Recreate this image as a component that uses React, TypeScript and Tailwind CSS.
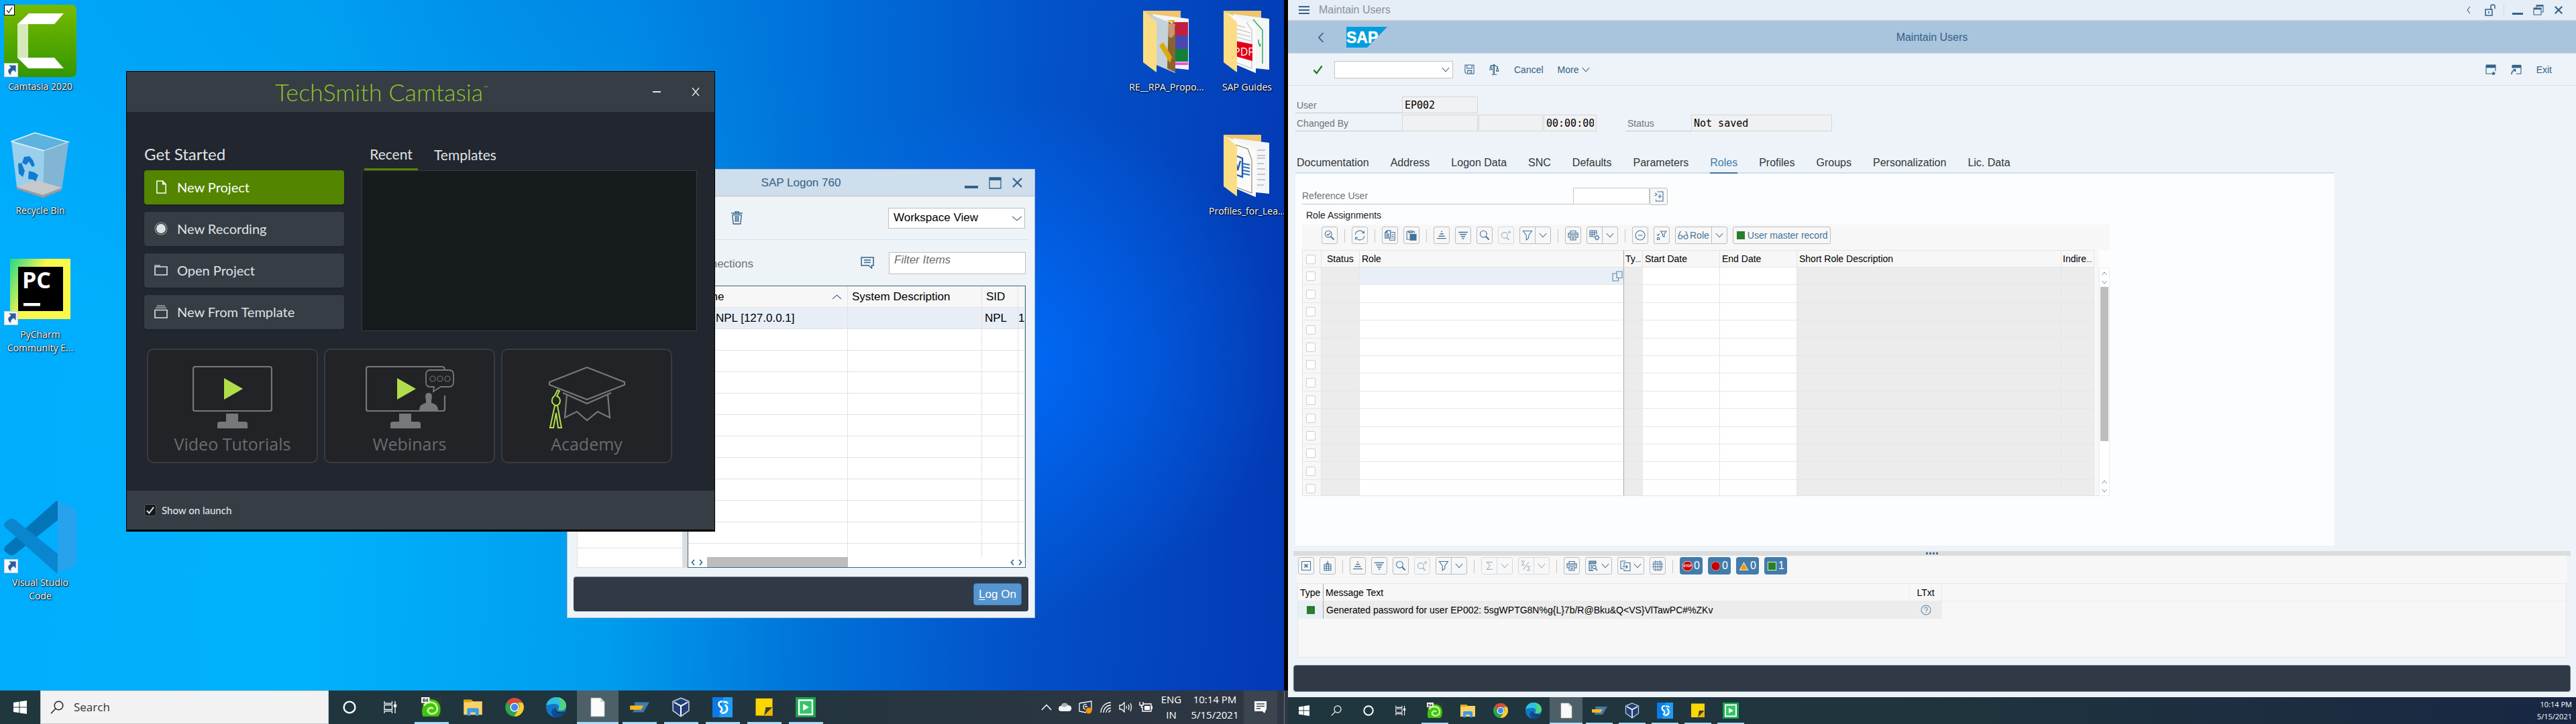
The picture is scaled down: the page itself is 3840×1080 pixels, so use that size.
import React from "react";
import type { ReactNode } from "react";

const SANS = "font-['Liberation_Sans',Arial,sans-serif]";
const SEGOE = "font-['Open_Sans','Noto_Sans',sans-serif]";
const LATO = "font-['Lato',sans-serif]";

type SvgProps = { className?: string; box?: string; children: ReactNode };

function Svg({ className = "size-4", box = "0 0 16 16", children }: SvgProps) {
  return (
    <svg className={className} viewBox={box} fill="none" stroke="currentColor" strokeWidth="1.1" aria-hidden="true" preserveAspectRatio="none">
      {children}
    </svg>
  );
}

/* ---------- Line icons of the SAP toolbars ---------- */

const Chevron = ({ className = "h-2 w-3" }: { className?: string }) => (
  <Svg className={className} box="0 0 12 8"><path d="M.8 1 6 6.8 11.2 1" /></Svg>
);
const DetailIcon = () => (
  <Svg><circle cx="6.2" cy="6.2" r="4.9" /><path d="m9.8 9.8 4.7 4.7" strokeWidth="1.8" /><path d="m3.8 6.2 1.8 1.9L8.8 4.4" strokeWidth="1.3" /></Svg>
);
const RefreshIcon = () => (
  <Svg><path d="M1.2 7A6.9 6.9 0 0 1 14 4.6M14.8 9A6.9 6.9 0 0 1 2 11.4M14.4 1.4v3.4H11M1.6 14.6v-3.4H5" /></Svg>
);
const CopyIcon = () => (
  <Svg><path d="M3.8.8h5v11.4H.8V3.8zM3.8.8v3H.8M2.5 6.2h4.6M2.5 8.2h4.6M2.5 10.2h4.6" strokeWidth="1.3" /><path d="M10 3.5h5.2v11.7H7.5v-2M10.5 7h3M10.5 9.5h3M10.5 12h3" /></Svg>
);
const PasteIcon = () => (
  <Svg><path d="M5 14H1.2V2.2h2.5M9.8 2.2h2.6v3" /><path d="M3.8 1.5h5.9v2.6H3.8z" fill="currentColor" fillOpacity=".4" /><path d="M6 6.5h9v8.800H6z" fill="currentColor" /></Svg>
);
const SortUpIcon = () => (
  <Svg><path d="M7 2.5h2M5.2 5.8h5.6M3.4 9.2h9.2M1 12.6h14" strokeWidth="1.4" /></Svg>
);
const SortDownIcon = () => (
  <Svg><path d="M1 3.5h14M3.2 6.8h9.6M5 10h6M6.6 13h2.8" strokeWidth="1.4" /></Svg>
);
const SearchIcon = () => (
  <Svg><circle cx="6.4" cy="6.2" r="4.9" /><path d="m10 9.8 4.6 4.7" strokeWidth="2" /></Svg>
);
const SearchPlusIcon = () => (
  <Svg><circle cx="5.8" cy="8" r="4.4" /><path d="m9 11.2 3.6 3.8" strokeWidth="1.8" /><path d="M13 .8v5M10.5 3.3h5" /></Svg>
);
const FilterIcon = () => (
  <Svg><path d="M1.5 1.5h13L9.8 8v4L6.2 15V8z" /></Svg>
);
const PrintIcon = () => (
  <Svg><path d="M4 4.5v-3h8v3M4 11H1V4.8h14V11h-3M1 6.8h14" /><path d="M4 9h8v6H4zM6 11.2h4M6 13h4" /></Svg>
);
const LayoutIcon = () => (
  <Svg><path d="M8 10H1V1h10v6M1 4h10M1 7h8M4.3 1v9M7.6 1v7" /><circle cx="11.5" cy="11.5" r="2.6" /><path d="M11.5 7.8v1M11.5 14.2v1.2M7.8 11.5h1M14.2 11.5h1.2M9 9l.7.7M13.4 13.4l.7.7M14 9l-.7.7M9 14l.7-.7" /></Svg>
);
const MinusIcon = () => (
  <Svg><circle cx="8" cy="8" r="7" /><path d="M4.8 8h6.4" /></Svg>
);
const FilterBackIcon = () => (
  <Svg><path d="M6.5 2h8.3l-3 4.2v4.3L9.4 9V6.2z" /><path d="M1 6.5l1.5 1.8 2.3-3M1.5 11.5h3v3h-3z" /></Svg>
);
const GlassesIcon = () => (
  <Svg><circle cx="3.8" cy="10.5" r="2.8" /><circle cx="12.2" cy="10.5" r="2.8" /><path d="M6.6 10h2.8M1 10l2.4-7L5 2.5M15 10l-2.4-7-1.6-.5" /></Svg>
);
const CloseBoxIcon = () => (
  <Svg><path d="M1.5 1.5h13v13h-13z" /><path d="m5.6 5.6 4.8 4.8M10.4 5.6l-4.8 4.8" strokeWidth="1.7" /></Svg>
);
const ExportGridIcon = () => (
  <Svg><path d="M3 6h10v9H3zM3 9h10M3 12h10M6.3 6v9M9.6 6v9M8 .8v5M6 3.8l2 2 2-2" strokeWidth="1.1" /></Svg>
);
const SigmaIcon = () => (
  <Svg><path d="M12 3.5V2.6H4.5L9 8l-4.5 5.4H12v-1" /></Svg>
);
const SubtotalIcon = () => (
  <Svg><path d="M6 1H1.5L4 4 1.5 7H6M14.5 9H10l2.5 3-2.5 3h4.5M3.5 14 12 2.5" /></Svg>
);
const ViewIcon = () => (
  <Svg><path d="M2 1h10v4H2z" fill="currentColor" fillOpacity=".7" /><path d="M2 5v10h6M4 7.5h2M4 10h2M4 12.5h2" strokeWidth="1.3" /><circle cx="9.5" cy="10" r="2.6" /><path d="m11.4 12 2.6 3" strokeWidth="1.6" /></Svg>
);
const SendIcon = () => (
  <Svg><path d="M5 12.5H1V1h7.5M6 8.5v-5h9v12H6v-3M3.5 9.5H11M8.6 7l2.5 2.5L8.6 12" /></Svg>
);
const GridIcon = () => (
  <Svg><path d="M2 2h12v12H2zM0 5.5h16M0 9.5h16M5 0v16M8.3 2v14M11.6 0v16" strokeWidth=".9" /></Svg>
);
const ValueHelpIcon = () => (
  <Svg className="h-4 w-3.5" box="0 0 14 16"><path d="M4.5 1H13v14H2.5v-2.5M8.3 5v6M5.3 8h6M1 3l3 2-3 2.2" /></Svg>
);
const F4Icon = () => (
  <Svg><path d="M7 1h8v9.5H7zM7 4H1v11h8.5v-4.5" /></Svg>
);

/* ---------- Taskbar pictures ---------- */

const StartIcon = () => (
  <Svg className="size-full" box="0 0 20 20"><path d="M0 3l8.5-1.2v7.7H0zM9.5 1.6 20 0v9.5H9.5zM0 10.5h8.5v7.7L0 17zM9.5 10.5H20V20L9.5 18.4z" fill="currentColor" stroke="none" /></Svg>
);
const LensIcon = () => (
  <Svg className="size-full" box="0 0 20 20"><circle cx="12.5" cy="7.5" r="6.3" strokeWidth="1.5" /><path d="M8 12 1 19.3" strokeWidth="1.5" /></Svg>
);
const CortanaIcon = () => (
  <Svg className="size-full" box="0 0 20 20"><circle cx="10" cy="10" r="8.4" strokeWidth="2.4" /></Svg>
);
const TaskViewIcon = () => (
  <Svg className="size-full" box="0 0 20 20"><path d="M1 1v3.200h11.5V1M1 19v-3.200h11.5V19M1 6.5h11.5v7H1zM17 1v18M15.500 6.500h3v2.500h-3z" strokeWidth="1.3" /></Svg>
);
const SapGui64 = () => (
  <Svg className="size-full" box="0 0 24 24">
    <path d="M1 0h23v23H1z" fill="#2d3a34" stroke="none" />
    <path d="M3 8c2-6 11-7 16-3 5 4 5 14 1 18H2c-2-5-1-11 1-15z" fill="#3fc413" stroke="none" />
    <path d="M3 10c5-6 15-5 16 3 1 7-9 9-11 4-1-4 5-6 6-3" stroke="#c8f78f" strokeWidth="2.3" />
    <path d="M0 0h10v7H0z" fill="#f3f3f3" stroke="none" />
    <text x="1.5" y="5.8" fontSize="6" fontWeight="700" fill="#222" stroke="none" fontFamily="Liberation Sans">64</text>
  </Svg>
);
const ExplorerIcon = () => (
  <Svg className="size-full" box="0 0 24 24"><path d="M1 3h9l2 2h11v16H1z" fill="#fcd266" stroke="none" /><path d="M1 3h9l1 1.5L10 6H1z" fill="#e8a200" stroke="none" /><path d="M5 22v-7q0-2 2-2h10q2 0 2 2v7h-4v-4H9v4z" fill="#3a9be8" stroke="none" /></Svg>
);
const ChromeIcon = () => (
  <Svg className="size-full" box="0 0 24 24">
    <circle cx="12" cy="12" r="11" fill="#2fa350" stroke="none" />
    <path d="M12 1a11 11 0 0 1 9.600 5.600H12A5.400 5.400 0 0 0 7 10L2.800 6A11 11 0 0 1 12 1z" fill="#e04635" stroke="none" />
    <path d="M21.600 6.600A11 11 0 0 1 11.500 23L16.800 14.500A5.400 5.400 0 0 0 15.500 6.600z" fill="#fbcb2c" stroke="none" />
    <circle cx="12" cy="12" r="5.300" fill="#fff" stroke="none" /><circle cx="12" cy="12" r="4.200" fill="#4a86ef" stroke="none" />
  </Svg>
);
const EdgeIcon = () => (
  <Svg className="size-full" box="0 0 24 24">
    <circle cx="12" cy="12" r="12" fill="#1276c8" stroke="none" />
    <path d="M.2 10C1 4 6 0 12 0c7 0 12 5 12 10 0 4-3 6-6.5 6-3 0-3-1.500-2.300-3C16 10.500 14 8 10.500 8 6 8 2 9 .2 10z" fill="#2fc0e0" stroke="none" />
    <path d="M14 .2C20 1 24 5 24 10c0 4-3 6-6.500 6-3 0-3-1.500-2.300-3 3-3 2-9-1.200-12.800z" fill="#4fd67c" stroke="none" />
    <path d="M8.500 13c0 6 6 8.500 13.500 5.500C20 22 16 24 12 24 7 23 4.500 18 8.500 13z" fill="#0c4a9a" stroke="none" />
    <path d="M11 12c-1 5 5 7.500 11.500 5l-.8 1.800C16 21.500 9.500 19 9.500 14z" fill="#20343d" stroke="none" />
  </Svg>
);
const PageIcon = () => (
  <Svg className="size-full" box="0 0 24 24"><path d="M4 1h11.500L20 5.500V23H4z" fill="#fafafa" stroke="#c9c9c9" strokeWidth=".6" /><path d="M15.500 1v4.500H20z" fill="#cfcfcf" stroke="none" /></Svg>
);
const LogonIcon = () => (
  <Svg className="size-full" box="0 0 24 24"><path d="M6 6h18l-7 12H4l3-5z" fill="#4178b0" stroke="none" /><path d="M1 10h16l-3 5H1z" fill="#fdb913" stroke="none" /></Svg>
);
const VBoxIcon = () => (
  <Svg className="size-full" box="0 0 24 24"><path d="M12 1 21.500 5v11L12 23 2.500 16V5z" fill="#223f75" stroke="#c9d4e2" strokeWidth="1.200" /><path d="M4 6l8 4.500L20 6M12 11v11" stroke="#fff" strokeWidth="1.600" /></Svg>
);
const BlueSIcon = () => (
  <Svg className="size-full" box="0 0 24 24"><path d="M0 0h24v24H0z" fill="#0a7be6" stroke="none" /><path d="M13 0h11v24H8z" fill="#1d9bf5" stroke="none" /><path d="M12 5c-6 0-5 5-2 7 2 1.500 2 4-1 6M13 5.500c4 0 5 1 5 2M15 9c4 3 4 10-4 10" stroke="#fff" strokeWidth="2.200" /></Svg>
);
const StickyIcon = () => (
  <Svg className="size-full" box="0 0 24 24"><path d="M2 1.500h20V22H2z" fill="#fdd602" stroke="none" /><path d="M12 22l2-10h8z" fill="#3c3c34" stroke="none" /><path d="M12 22 22 12v10z" fill="#f0b400" stroke="none" /></Svg>
);
const CamtasiaPlayIcon = () => (
  <Svg className="size-full" box="0 0 24 24"><path d="M0 0h24v24H0z" fill="#17a34c" stroke="none" /><path d="M4 3.500h16v17H4z" fill="#35c466" stroke="#fff" strokeWidth="2" /><path d="M9 8l7 4-7 4z" fill="#fff" stroke="none" /></Svg>
);

const apps: { name: string; icon: ReactNode; running: boolean; active?: boolean }[] = [
  { name: "SAP GUI 64", icon: <SapGui64 />, running: true },
  { name: "File Explorer", icon: <ExplorerIcon />, running: false },
  { name: "Chrome", icon: <ChromeIcon />, running: false },
  { name: "Edge", icon: <EdgeIcon />, running: false },
  { name: "Document", icon: <PageIcon />, running: true, active: true },
  { name: "SAP Logon", icon: <LogonIcon />, running: true },
  { name: "VirtualBox", icon: <VBoxIcon />, running: true },
  { name: "Snagit", icon: <BlueSIcon />, running: true },
  { name: "Sticky Notes", icon: <StickyIcon />, running: true },
  { name: "Camtasia", icon: <CamtasiaPlayIcon />, running: true },
];

function TaskApps({ compact = false }: { compact?: boolean }) {
  return (
    <>
      {apps.map((a) => (
        <button
          key={a.name}
          aria-label={a.name}
          className={`flex h-full flex-col items-center justify-end ${compact ? "w-[49px]" : "w-[62px]"} ${a.active ? "bg-[#4d6068]" : ""}`}
        >
          <span className="flex flex-1 items-center pt-0.5">
            <span className={compact ? "size-6" : "size-[30px]"}>{a.icon}</span>
          </span>
          <span className={`${compact ? "h-0.5" : "h-[3px]"} ${a.running ? "bg-[#a9dcfa]" : ""} ${a.active ? "w-full" : compact ? "w-10" : "w-[51px]"}`} />
        </button>
      ))}
    </>
  );
}

function GlyphButton({ label, className, small = false, children }: { label: string; className: string; small?: boolean; children: ReactNode }) {
  return (
    <button aria-label={label} className={`flex h-full items-center justify-center text-white ${className}`}>
      <span className={small ? "size-4" : "size-5"}>{children}</span>
    </button>
  );
}

/* ---------- Desktop icons ---------- */

const ShortcutArrow = () => (
  <span className="absolute bottom-0 left-0 size-[21px] border border-[#c8d0d8] bg-[#f6f8fa] text-[#2c5c9e]">
    <Svg className="size-full" box="0 0 20 20"><path d="M6.500 2.500h11v11l-3.500-3.500c-4 2-5 5-4 8-6-4-6-9 0-12z" fill="currentColor" stroke="none" /></Svg>
  </span>
);

const CamtasiaLogo = () => (
  <Svg className="size-[108px]" box="0 0 108 108">
    <defs><linearGradient id="cam" x1="0" y1="0" x2="0" y2="1"><stop stopColor="#77bb00" /><stop offset="1" stopColor="#349600" /></linearGradient></defs>
    <path d="M0 0h100q8 0 8 8v92q0 8-8 8H0z" fill="url(#cam)" stroke="none" />
    <path d="M20 29h16v50H20z" fill="#d5eab8" stroke="none" />
    <path d="M37 13h52L75 29H20zM20 79h55l14 16H36z" fill="#fff" stroke="none" />
  </Svg>
);
const RecycleLogo = () => (
  <Svg className="h-[98px] w-[88px]" box="0 0 88 98">
    <path d="M1 14 36 1l50 14-10 70-28 12L9 82z" fill="#9ad0ec" stroke="none" />
    <path d="M1 14 36 1l50 14-36 13z" fill="#5cb3de" stroke="#e6f5fc" strokeWidth="1.500" />
    <path d="M50 28l36-13-10 70-28 12z" fill="#82b4d4" stroke="none" />
    <path d="M9 82 36 71l40 12-28 13z" fill="#c6c8cc" stroke="none" />
    <path d="M9 82l39 12v4L9 85zM48 94l28-11v4L48 98z" fill="#989ba3" stroke="none" />
    <path d="M20 37l8-1 5 6 3 8-4 2-5-8-4 5-6-3zM11 47l5-1 5 12-3 9-6-5zM27 58l8 2 6 4-4 10-3-3-8-1z" fill="#0f7bd4" stroke="none" />
  </Svg>
);
const PyCharmLogo = () => (
  <Svg className="size-[90px]" box="0 0 90 90">
    <defs><linearGradient id="pc" x1="0" y1="0" x2="1" y2=".5"><stop stopColor="#21d789" /><stop offset=".5" stopColor="#fcf84a" /></linearGradient></defs>
    <path d="M0 0h90v90H0z" fill="url(#pc)" stroke="none" /><path d="M12 12h67v66H12z" fill="#000" stroke="none" />
    <text x="18" y="44" fontSize="34" fontWeight="700" fill="#fff" stroke="none" fontFamily="Open Sans">PC</text>
    <path d="M20 66h25v4.500H20z" fill="#fff" stroke="none" />
  </Svg>
);
const VsCodeLogo = () => (
  <Svg className="size-[108px]" box="0 0 108 108">
    <path d="M80 0v29L16 80q-5 3-9 0l-5-4q-4-4 0-8L77 1z" fill="#0274b8" stroke="none" />
    <path d="M80 108V79L16 28q-5-3-9 0l-5 4q-4 4 0 8l75 67z" fill="#0a86cf" stroke="none" />
    <path d="M80 0l22 10q6 3 6 8v72q0 5-6 8l-22 10z" fill="#27a3ee" stroke="none" />
  </Svg>
);

function Folder({ kind }: { kind: "photo" | "pdf" | "word" }) {
  return (
    <Svg className="h-[94px] w-[70px]" box="0 0 70 94">
      <path d="M0 1h56v60H0z" fill="#eec66c" stroke="none" />
      <path d="M14 6l54 7v76l-20-2z" fill="#f4f5f7" stroke="none" />
      {kind === "photo" && (
        <>
          <path d="M44 18h23v20H44z" fill="#c02040" stroke="none" /><path d="M44 38h23v20H44z" fill="#4848b0" stroke="none" />
          <path d="M44 58h23v19H44z" fill="#128038" stroke="none" /><path d="M44 78h23v4H44z" fill="#f050e0" stroke="none" />
        </>
      )}
      {kind === "pdf" && <path d="M44 14 58 30v50M52 44c0 8 2 10 2 6M55 51l-1 4" stroke="#2faa5e" strokeWidth="1.500" />}
      {kind === "word" && <path d="M50 24h12M50 32h12M50 36h12M50 44h10M50 52h12M50 60h12M50 68h12M50 76h10" stroke="#9a9a9a" />}
      <path d="M4 4l44 18v72L20 82z" fill={kind === "photo" ? "#c5d2d8" : "#fafafa"} stroke="none" />
      {kind === "photo" && (
        <>
          <path d="M38 17l10 6v70l-12-6z" fill="#8a6230" stroke="none" /><path d="M38 20h9v16q-6 10-9 2z" fill="#c99470" stroke="none" />
          <path d="M24 53l6-5 13 22-3 9z" fill="#dba90c" stroke="none" />
          <path d="M34 15h13v4z" fill="#e6b400" stroke="none" />
        </>
      )}
      {kind === "pdf" && (
        <>
          <path d="M18 22l14 4M18 28l22 6M18 34l22 6M18 40l22 6M18 78l24 9V30l-8-12" stroke="#b9bcc4" />
          <path d="M18 46l25 5v25l-25-7z" fill="#e2001a" stroke="none" />
          <text x="15" y="68" fontSize="16" fill="#fff" stroke="none" fontFamily="Open Sans">PDF</text>
        </>
      )}
      {kind === "word" && (
        <>
          <path d="M18 16l18 6 6 16v50L18 79" stroke="#8a8060" />
          <path d="M20 33l8 3v28l-8-3M18 40l3 14 4-14" stroke="#2058b0" strokeWidth="2.400" />
          <path d="M29 44l10 2M29 49l10 2M29 54l10 2M29 59l10 2" stroke="#2a70c0" strokeWidth="2" />
        </>
      )}
      <path d="M0 1l20 17v75L0 78z" fill="#fbdd84" stroke="none" />
    </Svg>
  );
}

function DesktopIcon({ pos, label, children }: { pos: string; label: string; children: ReactNode }) {
  return (
    <div className={`absolute flex w-[120px] flex-col items-center ${pos}`}>
      <div className="flex h-[108px] items-center justify-center">{children}</div>
      <span className="mt-1 text-center text-sm leading-5 whitespace-pre text-white [text-shadow:1px_1px_2px_#000,0_0_2px_#000]">{label}</span>
    </div>
  );
}

/* ---------- Camtasia start window ---------- */

const startActions: { label: string; icon: ReactNode; primary?: boolean }[] = [
  { label: "New Project", primary: true, icon: <Svg className="h-5 w-[17px]" box="0 0 18 20"><path d="M2 1h9l5 5v13H2z" strokeWidth="1.600" /><path d="M11 1v5h5z" fill="currentColor" /></Svg> },
  { label: "New Recording", icon: <Svg className="size-5" box="0 0 20 20"><circle cx="10" cy="10" r="9" strokeOpacity=".6" /><circle cx="10" cy="10" r="7" fill="currentColor" stroke="none" /></Svg> },
  { label: "Open Project", icon: <Svg className="h-4 w-5" box="0 0 20 16"><path d="M1 3h18v12H1z" strokeWidth="1.600" /><path d="M0 1h9" strokeWidth="2" strokeOpacity=".6" /></Svg> },
  { label: "New From Template", icon: <Svg className="size-5" box="0 0 20 20"><path d="M1 7.500h18V19H1z" strokeWidth="1.600" /><path d="M2 4.200h16M4 1.200h12" strokeOpacity=".7" strokeWidth="1.500" /></Svg> },
];

const MonitorArt = ({ people = false }: { people?: boolean }) => (
  <Svg className={people ? "h-[94px] w-[132px]" : "h-[94px] w-[119px]"} box={people ? "0 0 132 94" : "0 0 119 94"}>
    <path d={people ? "M118 44v20q0 3-3 3H4q-3 0-3-3V4q0-3 3-3h110q4 0 4 6" : "M4 1h111q3 0 3 3v60q0 3-3 3H4q-3 0-3-3V4q0-3 3-3z"} strokeWidth="2.200" />
    <path d="M50 71h18v12h10q4 0 4 3v7H37v-7q0-3 4-3h9z" fill="currentColor" stroke="none" />
    <path d="M47 18l28 16-28 16z" fill="#b2dd4a" stroke="none" />
    {people && (
      <>
        <path d="M96 6h28q7 0 7 7v11q0 7-7 7h-12l-11 7 1-7h-6q-6 0-6-7V13q0-7 6-7z" fill="#212326" strokeWidth="1.800" />
        <circle cx="100" cy="19" r="4" /><circle cx="111" cy="19" r="4" /><circle cx="122" cy="19" r="4" />
        <path d="M80 66q0-9 10-11v-4q-3-11 4-11t4 11v4q10 2 10 11z" fill="currentColor" stroke="none" />
      </>
    )}
  </Svg>
);
const CapArt = () => (
  <Svg className="h-[94px] w-[116px]" box="0 0 116 94">
    <path d="M58 2 114 24v4L58 50 2 28v-4z" strokeWidth="2.200" strokeLinejoin="round" /><path d="M22 40 58 56l36-16M28 42l-3 35 18-9 15 13 16-13 18 9-3-35" strokeWidth="2.200" />
    <path d="M14 36l-4 8q-5 4-4 10 3 5 7 5 5-2 5-8-1-5-5-6l4-8zM10 59 3 92h5l4-22 3 22h5L14 59z" stroke="#b2dd4a" strokeWidth="2" />
  </Svg>
);

function CamtasiaWindow() {
  const cards = [
    { label: "Video Tutorials", art: <MonitorArt /> },
    { label: "Webinars", art: <MonitorArt people /> },
    { label: "Academy", art: <CapArt /> },
  ];
  return (
    <section className={`absolute top-[106px] left-[188px] z-10 flex w-[878px] flex-col border border-b-[3px] border-black bg-[#22262e] text-[#dfe2e5] ${LATO}`}>
      <header className="relative flex h-[60px] items-center bg-[#363d44]">
        <h1 className="ml-[221px] flex text-4xl leading-none font-light text-[#92c12b]">
          TechSmith Camtasia<span className="text-[10px] leading-6">™</span>
        </h1>
        <button aria-label="Minimize" className="mr-[42px] ml-auto"><Svg className="size-4"><path d="M2 8h12" strokeWidth="2" /></Svg></button>
        <button aria-label="Close" className="mr-5"><Svg className="size-4"><path d="m3 2 10 12M13 2 3 14" strokeWidth="1.500" /></Svg></button>
      </header>
      <div className="px-[26px] pt-[45px] pb-[41px]">
        <div className="flex">
          <div className="w-[300px]">
            <h2 className="h-[42px] text-2xl leading-9">Get Started</h2>
            <div className="flex flex-col gap-[11px]">
              {startActions.map((a) => (
                <button key={a.label} className={`flex h-[51px] items-center gap-[14px] rounded pb-0.5 pl-[15px] text-xl shadow-sm ${a.primary ? "bg-[#538500] text-white" : "bg-[#363d44]"}`}>
                  <span className="flex w-5 justify-center">{a.icon}</span>{a.label}
                </button>
              ))}
            </div>
          </div>
          <div className="ml-[26px] flex flex-1 flex-col">
            <div role="tablist" className="ml-1 flex h-[42px] text-[21px]">
              <button role="tab" aria-selected="true" className="flex w-20 justify-center border-b-[3px] border-[#538500] leading-9">Recent</button>
              <button role="tab" aria-selected="false" className="px-6 pb-1 leading-9">Templates</button>
            </div>
            <div className="h-[240px] w-[500px] border border-[#363d42] bg-[#161b1d]" />
          </div>
        </div>
        <div className="mt-[26px] ml-1 flex gap-[9px]">
          {cards.map((c) => (
            <button key={c.label} className="flex h-[171px] w-[255px] flex-col items-center rounded-[10px] border-2 border-[#383b3f] bg-[#212326] pt-[24px] text-[#77787b]">
              {c.art}
              <span className={`mt-1 text-[25px] leading-9 text-[#6a6b6e] ${SEGOE}`}>{c.label}</span>
            </button>
          ))}
        </div>
      </div>
      <footer className="flex h-[58px] items-center bg-[#363d44] pl-[26px]">
        <label className="flex items-center gap-2 text-[15px] font-medium">
          <span className="relative flex size-[18px]">
            <input type="checkbox" defaultChecked className="size-[18px] appearance-none rounded-sm border border-[#555c61] bg-[#15191b]" />
            <span className="pointer-events-none absolute inset-0"><Svg className="size-full"><path d="M3.500 8.500 6.500 12l6-8" strokeWidth="1.800" /></Svg></span>
          </span>
          Show on launch
        </label>
      </footer>
    </section>
  );
}

/* ---------- SAP Logon window ---------- */

function SapLogonWindow() {
  const cell = "h-8 border-r border-b border-[#e2e2e2] align-middle overflow-hidden whitespace-nowrap";
  return (
    <section className={`absolute top-[252px] left-[845px] flex w-[698px] flex-col border border-[#b7bfc7] bg-[#eef3f8] text-[17px] text-black ${SANS}`}>
      <header className="relative flex h-[40px] items-center justify-center border-b border-[#b9bfc6] bg-[#cfdeec] text-[#346187]">
        SAP Logon 760
        <div className="absolute right-[18px] flex items-center gap-4">
          <button aria-label="Minimize" className="pt-3"><Svg className="h-1 w-5" box="0 0 20 4"><path d="M0 2h20" strokeWidth="4" /></Svg></button>
          <button aria-label="Maximize"><Svg className="h-[18px] w-[19px]" box="0 0 19 18"><path d="M1 1h17v16H1z" strokeWidth="1.300" /><path d="M1 3h17" strokeWidth="4" /></Svg></button>
          <button aria-label="Close"><Svg className="size-[15px]"><path d="m1 1 14 14M15 1 1 15" strokeWidth="2.400" /></Svg></button>
        </div>
      </header>
      <div className="mx-[10px] flex h-[65px] items-center border-b border-[#d3e0ee] pr-1">
        <button aria-label="Delete" className="mr-[216px] ml-auto text-[#346187]">
          <Svg className="h-5 w-[19px]" box="0 0 18 20"><path d="M1 3h16M6.500 2.500V1h5v1.500M2.500 5.500 4 19h10l1.500-13.500M7 7v9M9 7v9M11 7v9M3 5.500h12" strokeWidth="1.300" /></Svg>
        </button>
        <div className="relative">
          <select aria-label="View" defaultValue="w" className="block h-[31px] w-[204px] appearance-none border border-[#bfbfbf] bg-white pl-[7px]">
            <option value="w">Workspace View</option>
          </select>
          <span className="pointer-events-none absolute top-3 right-1 text-[#346187]"><Chevron className="h-2 w-4" /></span>
        </div>
      </div>
      <div className="flex h-[68px] items-center pr-[13px]">
        <span className="mt-1 ml-auto text-[#6d7379]">Connections</span>
        <Svg className="mr-[22px] ml-[160px] h-[18px] w-5 text-[#346187]" box="0 0 20 18"><path d="M1 1h18v12h-2.500v4L12 13H1zM5 5h10M5 8.500h10" strokeWidth="1.500" /></Svg>
        <input aria-label="Filter Items" placeholder="Filter Items" className="h-[33px] w-[204px] border border-[#bfbfbf] bg-white pb-2 pl-[7px] italic placeholder:text-[#6d6d6d]" />
      </div>
      <div className="flex h-[421px] pr-[13px] pl-[14px]">
        <div className="flex flex-1 flex-col justify-end border border-[#dfe1e3] bg-white"><div className="h-[29px] border-t border-[#dfe1e3]" /></div>
        <div className="w-[7px] bg-[#dadddd]" />
        <div className="flex w-[504px] flex-col border border-[#3c667c] bg-white">
          <div className="flex-1 overflow-hidden">
            <table className="w-full table-fixed border-separate border-spacing-0 text-left">
              <colgroup><col className="w-[238px]" /><col className="w-[200px]" /><col className="w-[54px]" /><col /></colgroup>
              <thead className="bg-[#f7f7f7]">
                <tr>
                  <th className={`${cell} pl-2 font-normal`}><span className="flex items-center justify-between pr-2">Name<span className="rotate-180 text-[#346187]"><Chevron className="h-2 w-[15px]" /></span></span></th>
                  <th className={`${cell} pl-1.5 font-normal`}>System Description</th>
                  <th className={`${cell} pl-1.5 font-normal`}>SID</th>
                  <th className={`${cell} font-normal`} />
                </tr>
              </thead>
              <tbody>
                <tr className="bg-[#e8eef6]">
                  <td className={`${cell} pl-[41px]`}>NPL [127.0.0.1]</td><td className={cell} /><td className={`${cell} pl-1`}>NPL</td><td className={cell}>1</td>
                </tr>
                {Array.from({ length: 11 }, (_, i) => (
                  <tr key={i}><td className={cell} /><td className={cell} /><td className={cell} /><td className={cell} /></tr>
                ))}
              </tbody>
            </table>
          </div>
          <div className="flex h-[15px] items-center gap-1.5 px-1 text-[#2f6f9f]">
            <Svg className="h-2.5 w-1.5" box="0 0 6 10"><path d="M5 1 1.500 5 5 9" strokeWidth="1.800" /></Svg>
            <Svg className="h-2.5 w-1.5" box="0 0 6 10"><path d="m1 1 3.500 4L1 9" strokeWidth="1.800" /></Svg>
            <div className="h-full w-[210px] bg-[#bdbdbd]" />
            <Svg className="ml-auto h-2.5 w-1.5" box="0 0 6 10"><path d="M5 1 1.500 5 5 9" strokeWidth="1.800" /></Svg>
            <Svg className="h-2.5 w-1.5" box="0 0 6 10"><path d="m1 1 3.500 4L1 9" strokeWidth="1.800" /></Svg>
          </div>
        </div>
      </div>
      <footer className="mx-[9px] mt-[13px] mb-[9px] flex h-[52px] items-center justify-end rounded border-t border-[#7d8890] bg-[#2f3a46] pr-2.5">
        <button className="h-[33px] w-[72px] rounded-sm border border-[#3a7ab8] bg-[#5695cf] text-white"><span className="underline underline-offset-2">L</span>og On</button>
      </footer>
    </section>
  );
}

/* ---------- Left monitor ---------- */

function LeftMonitor() {
  return (
    <div className={`flex min-w-0 flex-col ${SEGOE}`}>
      <main className="relative flex-1 overflow-hidden border-r-[6px] border-black bg-[radial-gradient(ellipse_22%_38%_at_78%_52%,#006effdd,#0066f000),radial-gradient(ellipse_60%_70%_at_48%_-10%,#0060d466,#0060d400),linear-gradient(92deg,#00adfd_0%,#00b2fb_25%,#009cee_48%,#0072d8_64%,#0350c8_80%,#0339b4_100%)]">
        <DesktopIcon pos="left-0 top-[7px]" label="Camtasia 2020">
          <span className="relative">
            <CamtasiaLogo />
            <input type="checkbox" aria-label="Select Camtasia 2020" className="absolute top-0 left-0 size-4 appearance-none border border-black bg-white" />
            <span className="pointer-events-none absolute top-0 left-0 text-black"><Svg><path d="m4 8 3 4 5-8" /></Svg></span>
            <ShortcutArrow />
          </span>
        </DesktopIcon>
        <DesktopIcon pos="left-0 top-[192px]" label="Recycle Bin"><RecycleLogo /></DesktopIcon>
        <DesktopIcon pos="left-0 top-[377px]" label={"PyCharm\nCommunity E..."}>
          <span className="relative flex size-[108px] items-center justify-center"><PyCharmLogo /><ShortcutArrow /></span>
        </DesktopIcon>
        <DesktopIcon pos="left-0 top-[747px]" label={"Visual Studio\nCode"}><span className="relative"><VsCodeLogo /><ShortcutArrow /></span></DesktopIcon>
        <DesktopIcon pos="right-[115px] top-[8px]" label="RE__RPA_Propo..."><Folder kind="photo" /></DesktopIcon>
        <DesktopIcon pos="-right-[5px] top-[8px]" label="SAP Guides"><Folder kind="pdf" /></DesktopIcon>
        <DesktopIcon pos="-right-[5px] top-[193px]" label="Profiles_for_Lea..."><Folder kind="word" /></DesktopIcon>
        <SapLogonWindow />
        <CamtasiaWindow />
      </main>
      <footer className="flex h-[50px] items-center bg-linear-to-r from-[#20373e] via-[#20343d] to-[#2f3744] text-white">
        <GlyphButton label="Start" className="w-[60px]"><StartIcon /></GlyphButton>
        <label className="flex h-full w-[430px] items-center gap-[15px] border border-[#c5c8c9] bg-[#f2f2f2] pl-3.5 text-[#222]">
          <span className="size-5"><LensIcon /></span>
          <input type="search" placeholder="Search" className="flex-1 bg-transparent text-[17px] outline-none placeholder:text-[#333]" />
        </label>
        <GlyphButton label="Cortana" className="w-[62px]"><CortanaIcon /></GlyphButton>
        <GlyphButton label="Task View" className="w-[60px]"><TaskViewIcon /></GlyphButton>
        <TaskApps />
        <div className="ml-auto flex h-full items-center gap-2.5">
          <Svg className="h-2.5 w-4" box="0 0 16 10"><path d="M1 9 8 1.500 15 9" strokeWidth="1.500" /></Svg>
          <Svg className="h-4 w-5" box="0 0 20 16"><path d="M4 14a4 4 0 0 1 0-8c1-5 8-6 10-1 4 0 6 3 5 6-1 3-3 3-4 3z" fill="#f4f4f4" stroke="none" /><path d="M4 6c1-5 8-6 10-1L9 8z" fill="#aab0b5" stroke="none" /></Svg>
          <Svg className="size-5" box="0 0 20 20"><path d="M1 4 19 1v13M1 4v12l10 2M12 6c-3-1-5 0-5 3s1 4 3 4M9 9h4" strokeWidth="1.300" /><circle cx="15" cy="15" r="4.500" fill="#ff9500" stroke="none" /></Svg>
          <Svg className="size-5" box="0 0 20 20"><path d="M3 18A15 15 0 0 1 18 3M7 18A11 11 0 0 1 18 7M11 18a7 7 0 0 1 7-7M15 18a3 3 0 0 1 3-3" strokeWidth="1.300" /></Svg>
          <Svg className="size-5" box="0 0 20 20"><path d="M1 7h3l4-4v14l-4-4H1zM11 8q1 2 0 4M14 6q2 4 0 8M17 4q3 6 0 12" strokeWidth="1.300" /></Svg>
          <Svg className="size-5" box="0 0 20 20"><path d="M6 5h12v11H5V9M1 2v5h5V2M3.500 7v4" strokeWidth="1.400" /><path d="M8 8h8v6H8zM18 8h2v5h-2z" fill="currentColor" stroke="none" /></Svg>
          <button className="flex w-9 flex-col items-center text-[15px] leading-[23px]"><span>ENG</span><span>IN</span></button>
          <time className="-mr-1 flex w-[74px] flex-col items-center text-[15px] leading-[23px]"><span>10:14 PM</span><span>5/15/2021</span></time>
          <button aria-label="Notifications" className="flex h-full w-[50px] items-center justify-center bg-[#3b444f]">
            <Svg className="size-5" box="0 0 20 20"><path d="M1 1h18v11l-3 7-3-3H1z" fill="#fff" stroke="none" /><path d="M4 5h12M4 8.500h12M4 12h6" stroke="#3b444f" strokeWidth="1.500" /></Svg>
          </button>
          <span className="h-full w-1.5 border-l border-[#6f767e]" />
        </div>
      </footer>
    </div>
  );
}

/* ---------- SAP GUI ---------- */

const toolBtn = "flex h-[26px] items-center justify-center rounded-[3px] border border-[#bdbdbd] bg-[#f7f7f7] text-[#44739b]";

function Tool({ label, children, off = false }: { label: string; children: ReactNode; off?: boolean }) {
  return <button aria-label={label} disabled={off} className={`${toolBtn} w-6 ${off ? "opacity-50" : ""}`}>{children}</button>;
}
function SplitTool({ label, children, off = false, text }: { label: string; children: ReactNode; off?: boolean; text?: string }) {
  return (
    <div className={`${toolBtn} ${off ? "opacity-50" : ""}`}>
      <button aria-label={label} disabled={off} className={`flex h-full items-center ${text ? "gap-0.5 px-[3px]" : "w-[22px] justify-center"}`}>{children}{text}</button>
      <button aria-label={`${label} options`} disabled={off} className="flex h-full w-[23px] items-center justify-center border-l border-[#bdbdbd]"><Chevron /></button>
    </div>
  );
}
function MenuTool({ label, children }: { label: string; children: ReactNode }) {
  return <button aria-label={label} className={`${toolBtn} w-10 gap-1`}>{children}<Chevron /></button>;
}
const Sep = () => <span className="mx-0.5 h-5 w-px bg-[#c9c9c9]" />;

function Counter({ label, value, children }: { label: string; value: number; children: ReactNode }) {
  return (
    <button aria-label={label} className="flex h-[26px] w-[34px] items-center justify-center gap-0.5 rounded-sm bg-[#427cac] text-base text-white">
      {children}{value}
    </button>
  );
}

const tabs = ["Documentation", "Address", "Logon Data", "SNC", "Defaults", "Parameters", "Roles", "Profiles", "Groups", "Personalization", "Lic. Data"];

const box = "size-[14px] appearance-none rounded-[2px] border border-[#cfcfcf] bg-white align-middle";

function RoleTable() {
  const head = "h-[26px] border-r border-y border-[#e4e4e4] bg-[#f7f7f7] font-normal text-left whitespace-nowrap overflow-hidden";
  const line = "border-r border-b border-[#e6e6e6]";
  return (
    <div className="flex">
      <div className="h-[367px] flex-1 overflow-hidden border-b border-[#e4e4e4] bg-[#f7f7f7]">
        <table className="w-[1181px] table-fixed border-separate border-spacing-0 border-l border-[#e4e4e4]">
          <colgroup>
            <col className="w-[28px]" /><col className="w-[57px]" /><col className="w-[394px]" /><col className="w-[28px]" />
            <col className="w-[115px]" /><col className="w-[115px]" /><col className="w-[394px]" /><col />
          </colgroup>
          <thead>
            <tr>
              <th className={`${head} pl-[5px]`}><input type="checkbox" aria-label="Select all rows" className={box} /></th>
              <th className={`${head} pl-2`}>Status</th>
              <th className={`${head} border-r-[#a8a8a8] pl-[3px]`}>Role</th>
              <th className={`${head} pl-0.5`}>Ty<span className="text-[10px]">...</span></th>
              <th className={`${head} pl-[3px]`}>Start Date</th>
              <th className={`${head} pl-[3px]`}>End Date</th>
              <th className={`${head} pl-[3px]`}>Short Role Description</th>
              <th className={`${head} pl-0.5`}>Indire<span className="text-[10px]">...</span></th>
            </tr>
          </thead>
          <tbody>
            {Array.from({ length: 13 }, (_, i) => (
              <tr key={i} className={i % 5 === 1 || i % 5 === 3 ? "h-[27px]" : "h-[26px]"}>
                <td className={`${line} bg-[#f7f7f7] pl-[5px] leading-none`}><input type="checkbox" aria-label={`Select row ${i + 1}`} className={box} /></td>
                <td className={`${line} bg-[#ececec]`} />
                <td className={`${line} border-r-[#a8a8a8] ${i === 0 ? "bg-[#e8eff7]" : "bg-white"}`}>
                  {i === 0 && <button aria-label="Role value help" className="ml-auto block pr-px text-[#5a88b0]"><F4Icon /></button>}
                </td>
                <td className={`${line} bg-[#ececec]`} />
                <td className={`${line} bg-white`} />
                <td className={`${line} bg-white`} />
                <td className={`${line} bg-[#ececec]`} />
                <td className={`${line} bg-[#ececec]`} />
              </tr>
            ))}
          </tbody>
        </table>
      </div>
      <div className="mt-[26px] flex w-4 flex-col items-center border border-[#ececec] bg-white text-[#44739b]">
        <span className="mt-[5px] rotate-180"><Chevron className="h-1.5 w-2" /></span>
        <span className="mt-[7px]"><Chevron className="h-1.5 w-2" /></span>
        <div className="mt-1 h-[230px] w-3 bg-[#bebebe]" />
        <span className="mt-auto rotate-180"><Chevron className="h-1.5 w-2" /></span>
        <span className="mt-[7px] mb-1"><Chevron className="h-1.5 w-2" /></span>
      </div>
    </div>
  );
}

function RolesPanel() {
  return (
    <section className="mr-[360px] ml-[11px] h-[555px] bg-[#fcfdff] pl-[10px] text-sm text-black">
      <div className="flex items-start pt-[21px]">
        <label htmlFor="ref-user" className="h-[25px] w-[404px] border-b border-[#c4c8cc] leading-[25px] text-[#6f7478]">Reference User</label>
        <input id="ref-user" className="h-[25px] w-[114px] border border-[#c8c8c8] bg-white px-1" />
        <button aria-label="Reference user value help" className="flex h-[26px] w-[27px] items-center justify-center rounded-[3px] border border-[#bdbdbd] bg-[#f7f7f7] text-[#44739b]"><ValueHelpIcon /></button>
      </div>
      <h2 className="h-[29px] pl-1.5 leading-[31px] text-[#222]">Role Assignments</h2>
      <div className="w-[1204px]">
        <div className="flex h-[38px] gap-2 bg-[#f7f7f7] pt-[3px] pl-[29px] [&>span]:mt-1">
          <Tool label="Details"><DetailIcon /></Tool>
          <Sep />
          <Tool label="Refresh"><RefreshIcon /></Tool>
          <Sep />
          <Tool label="Copy"><CopyIcon /></Tool>
          <Tool label="Paste"><PasteIcon /></Tool>
          <Sep />
          <Tool label="Sort ascending"><SortUpIcon /></Tool>
          <Tool label="Sort descending"><SortDownIcon /></Tool>
          <Tool label="Find"><SearchIcon /></Tool>
          <Tool label="Find next" off><SearchPlusIcon /></Tool>
          <SplitTool label="Filter"><FilterIcon /></SplitTool>
          <Sep />
          <Tool label="Print"><PrintIcon /></Tool>
          <SplitTool label="Layout"><LayoutIcon /></SplitTool>
          <Sep />
          <Tool label="Remove"><MinusIcon /></Tool>
          <Tool label="Filter back"><FilterBackIcon /></Tool>
          <SplitTool label="Role" text="Role"><GlassesIcon /></SplitTool>
          <button className={`${toolBtn} gap-1 px-[3px] pl-[5px] whitespace-nowrap`}><i className="size-3 bg-[#2a7d2a]" />User master record</button>
        </div>
        <RoleTable />
      </div>
    </section>
  );
}

function MessagePanel() {
  return (
    <section className="mr-[14px] ml-[14px] flex h-[152px] flex-col bg-[#f7f7f7] text-sm text-black">
      <div className="flex h-[41px] gap-2 pt-[2px] pl-px [&>span]:mt-1">
        <Tool label="Close"><CloseBoxIcon /></Tool>
        <Tool label="Export"><ExportGridIcon /></Tool>
        <Sep />
        <Tool label="Sort ascending"><SortUpIcon /></Tool>
        <Tool label="Sort descending"><SortDownIcon /></Tool>
        <Tool label="Find"><SearchIcon /></Tool>
        <Tool label="Find next" off><SearchPlusIcon /></Tool>
        <SplitTool label="Filter"><FilterIcon /></SplitTool>
        <Sep />
        <SplitTool label="Total" off><SigmaIcon /></SplitTool>
        <SplitTool label="Subtotal" off><SubtotalIcon /></SplitTool>
        <Sep />
        <Tool label="Print"><PrintIcon /></Tool>
        <MenuTool label="Views"><ViewIcon /></MenuTool>
        <MenuTool label="Send"><SendIcon /></MenuTool>
        <Tool label="Grid"><GridIcon /></Tool>
        <Sep />
        <Counter label="Aborts" value={0}><Svg className="size-[15px]"><path d="M5 .5h6l4.500 4.500v6L11 15.500H5L.5 11V5z" fill="#c00" stroke="#e8b0b0" /><text x="8" y="10" fontSize="5" fontWeight="700" textAnchor="middle" fill="#fff" stroke="none" fontFamily="Liberation Sans">STOP</text></Svg></Counter>
        <Counter label="Errors" value={0}><Svg className="size-[15px]"><circle cx="8" cy="8" r="7" fill="#c00000" stroke="#d88080" /></Svg></Counter>
        <Counter label="Warnings" value={0}><Svg className="size-[15px]"><path d="M8 2.500 14.500 14h-13z" fill="#f09a00" stroke="#f6e2bc" /></Svg></Counter>
        <Counter label="Success" value={1}><Svg className="size-[15px]"><path d="M1.500 1.500h13v13h-13z" fill="#2a7d2a" stroke="#d6ecd6" /></Svg></Counter>
      </div>
      <div className="flex-1 border border-[#e6e6e6]">
        <table className="w-full table-fixed border-separate border-spacing-0 text-left">
          <colgroup><col className="w-[38px]" /><col className="w-[874px]" /><col className="w-12" /><col /></colgroup>
          <thead>
            <tr className="h-[26px]">
              <th className="border-r border-b border-r-[#a8a8a8] border-b-[#ececec] pl-[3px] font-normal">Type</th>
              <th className="border-r border-b border-[#ececec] pl-[3px] font-normal">Message Text</th>
              <th className="border-r border-b border-[#ececec] text-center font-normal">LTxt</th>
              <th className="border-b border-[#ececec]" />
            </tr>
          </thead>
          <tbody>
            <tr className="h-[26px] bg-[#ececec]">
              <td className="border-r border-r-[#a8a8a8] bg-[#e8eff7]"><i className="ml-[13px] block size-3 bg-[#2a7d2a]" /></td>
              <td className="pl-1">{"Generated password for user EP002: 5sgWPTG8N%g{L}7b/R@Bku&Q<VS}VlTawPC#%ZKv"}</td>
              <td><button aria-label="Long text" className="mx-auto block text-[#5a88b0]"><Svg><circle cx="8" cy="8" r="7" /><path d="M5.800 6.200a2.200 2.200 0 1 1 3.200 2Q8 8.700 8 9.800M8 11v1.200" /></Svg></button></td>
              <td className="bg-[#f7f7f7]" />
            </tr>
          </tbody>
        </table>
      </div>
    </section>
  );
}

function SapGui() {
  const label = "h-[25px] border-b border-[#c4c8cc] pl-0.5 leading-[26px] text-[#6f7478]";
  const field = "h-[25px] border border-[#d4d6d8] bg-[#f0f1f2] px-[3px] font-['DejaVu_Sans_Mono',monospace] text-[15px] text-black";
  return (
    <div className={`flex flex-1 flex-col bg-[#edf3f8] text-sm text-[#346187] ${SANS}`}>
      <header className="flex h-[32px] items-center border-b-2 border-[#c4c8ce] bg-[#e5edf6] pl-4 text-base">
        <button aria-label="Menu"><Svg className="h-3.5 w-4" box="0 0 16 14"><path d="M0 2h16M0 7h16M0 12h16" strokeWidth="2.200" /></Svg></button>
        <span className="ml-[14px] text-[#8b9198]">Maintain Users</span>
        <div className="mr-5 ml-auto flex items-center">
          <button aria-label="Previous"><Svg className="h-3 w-2" box="0 0 8 12"><path d="M6 1 2 6l4 5" /></Svg></button>
          <button aria-label="Unlock" className="ml-5"><Svg className="h-[18px] w-4" box="0 0 16 18"><path d="M1 8h10v9H1zM9 8V3.500q0-2.500 3-2.500t3 2.500V7M6 11v3" strokeWidth="1.500" /></Svg></button>
          <span className="mx-3 h-4 w-px bg-[#ccd3da]" />
          <button aria-label="Minimize" className="pt-2.5"><Svg className="h-[3px] w-4" box="0 0 16 3"><path d="M0 1.500h16" strokeWidth="3" /></Svg></button>
          <button aria-label="Restore" className="ml-[15px]"><Svg><path d="M1 5h11v10H1zM5 4V1h10v10h-2" /><path d="M1 6h11M5 1.500h10" strokeWidth="2.400" /></Svg></button>
          <button aria-label="Close" className="ml-4"><Svg className="size-3"><path d="m1 1 14 14M15 1 1 15" strokeWidth="3" /></Svg></button>
        </div>
      </header>
      <div className="relative flex h-12 items-center justify-center border-b border-[#d3dbe4] bg-[#a9c4dd] text-base">
        <div className="absolute left-11 flex items-center gap-[33px]">
          <button aria-label="Back"><Svg className="h-4 w-2.5" box="0 0 10 16"><path d="M8.500 1 2 8l6.500 7" strokeWidth="1.800" /></Svg></button>
          <Svg className="h-[31px] w-[61px]" box="0 0 61 31"><path d="M0 0h61L31 31H0z" fill="#009de0" stroke="none" /><text x="0" y="24" fontSize="23" fontWeight="700" fill="#fff" stroke="#fff" strokeWidth=".5" fontFamily="Liberation Sans">SAP</text></Svg>
        </div>
        <h1>Maintain Users</h1>
      </div>
      <div className="flex h-[48px] items-center border-b border-[#d3e3f5] pl-[37px]">
        <button aria-label="Enter" className="text-[#1f7d1f]"><Svg className="h-3.5 w-[15px]"><path d="M1.500 8.500 6 14 14.500 1.500" strokeWidth="2.500" /></Svg></button>
        <div className="relative ml-[17px]">
          <input aria-label="Command" className="block h-[26px] w-[177px] border border-[#c4c4c4] bg-white px-1" />
          <span className="pointer-events-none absolute top-[9px] right-[5px]"><Chevron /></span>
        </div>
        <button aria-label="Save" className="ml-[17px]"><Svg className="size-[15px]"><path d="M1 1h14v14H3.500L1 12.500zM4 1v5.500h8V1M5 15v-5h6.500v5M9 12v3" /></Svg></button>
        <button aria-label="Compare" className="ml-[22px]"><Svg className="h-[17px] w-[15px]"><path d="M8 .5v14M4 15.300h8M2 3l6-1 6 3M2.500 3 .8 8.500h3.600zM13 5l-1.700 5.500h3.500zM6.500 1v14" /></Svg></button>
        <button className="ml-[22px]">Cancel</button>
        <button className="ml-[21px] flex items-center gap-1">More<Chevron /></button>
        <button aria-label="New window" className="ml-auto"><Svg><path d="M1 1h14v9M1 1v13h8" /><path d="M1 3h14" strokeWidth="4.500" /><path d="M12 10l1 2.500 2.500.2-1.900 1.500.6 2-2.200-1-2.200 1 .6-2-1.900-1.500 2.500-.2z" fill="currentColor" stroke="none" /></Svg></button>
        <button aria-label="Shortcut" className="ml-[22px]"><Svg><path d="M2 1v5M15 1v13H8" /><path d="M2 3h13" strokeWidth="4.500" /><path d="M1 15c0-4 1-6 5-6M3.500 7.500H6.500V11" strokeWidth="1.500" /></Svg></button>
        <button className="mr-9 ml-[22px]">Exit</button>
      </div>
      <div className="flex flex-col gap-0.5 pt-4 pl-[11px]">
        <div className="flex">
          <label htmlFor="user" className={`${label} w-[159px]`}>User</label>
          <input id="user" readOnly value="EP002" className={`${field} w-[113px]`} />
        </div>
        <div className="flex">
          <label htmlFor="changed" className={`${label} w-[159px]`}>Changed By</label>
          <input id="changed" readOnly className={`${field} w-[113px]`} />
          <input aria-label="Change date" readOnly className={`${field} ml-px w-24`} />
          <input aria-label="Change time" readOnly value="00:00:00" className={`${field} ml-px w-[79px]`} />
          <label htmlFor="status" className={`${label} ml-11 w-[97px]`}>Status</label>
          <input id="status" readOnly value="Not saved" className={`${field} w-[210px]`} />
        </div>
      </div>
      <nav role="tablist" className="mt-[31px] mr-[360px] ml-[11px] flex h-8 gap-8 border-b-2 border-[#cfe0f0] pl-0.5 text-base text-[#32363a]">
        {tabs.map((t) => (
          <button key={t} role="tab" aria-selected={t === "Roles"} className={`-mb-0.5 border-b-2 pt-0.5 whitespace-nowrap ${t === "Roles" ? "border-[#3a72a4] text-[#427cac]" : "border-transparent"}`}>{t}</button>
        ))}
      </nav>
      <RolesPanel />
      <div className="mt-2 mr-2 ml-2 flex h-[7px] items-center justify-center gap-0.5 bg-[#dcdcdc]">
        {[0, 1, 2, 3].map((d) => <i key={d} className="size-[3px] bg-[#44739b]" />)}
      </div>
      <MessagePanel />
      <div className="mx-2 mt-[11px] mb-2 flex-1 rounded border border-[#65757e] bg-[#2f3a46]" />
    </div>
  );
}

function RightMonitor() {
  return (
    <div className="flex min-w-0 flex-col">
      <SapGui />
      <footer className={`flex h-10 items-center bg-linear-to-r from-[#20363e] via-[#20343d] to-[#192743] text-white ${SEGOE}`}>
        <GlyphButton small label="Start" className="w-12"><StartIcon /></GlyphButton>
        <GlyphButton small label="Search" className="w-12"><LensIcon /></GlyphButton>
        <GlyphButton small label="Cortana" className="w-12"><CortanaIcon /></GlyphButton>
        <GlyphButton small label="Task View" className="mr-0.5 w-12"><TaskViewIcon /></GlyphButton>
        <TaskApps compact />
        <time className="mr-1.5 ml-auto flex flex-col items-end text-[11px] leading-[18px]"><span>10:14 PM</span><span>5/15/2021</span></time>
      </footer>
    </div>
  );
}

export default function App() {
  return (
    <div className="grid min-h-screen w-full grid-cols-2 bg-black">
      <LeftMonitor />
      <RightMonitor />
    </div>
  );
}
